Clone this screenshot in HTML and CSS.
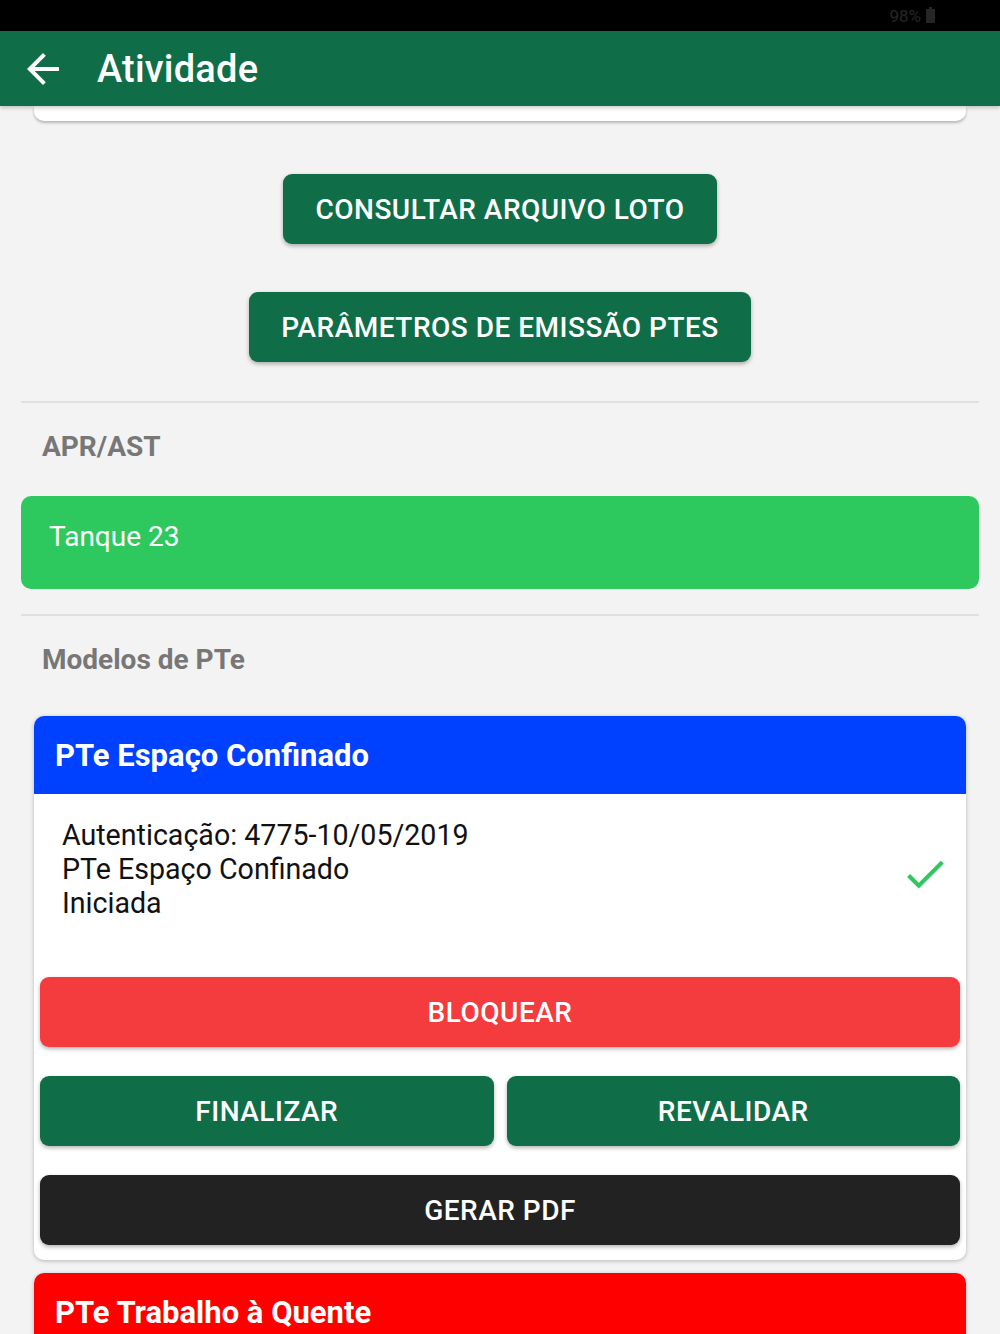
FILE: index.html
```html
<!DOCTYPE html>
<html lang="pt-BR">
<head>
<meta charset="UTF-8" />
<meta name="viewport" content="width=device-width, initial-scale=1" />
<title>Atividade</title>
<link rel="stylesheet" href="styles.css">
</head>
<body>

<div class="status-bar">
  <span class="bateria-texto">98%</span>
  <span class="bateria"></span>
</div>

<header class="app-bar">
  <svg class="voltar" viewBox="0 0 24 24" width="48" height="48">
    <path d="M20 11H7.83l5.59-5.59L12 4l-8 8 8 8 1.41-1.41L7.83 13H20v-2z" fill="#fff"/>
  </svg>
  <h1>Atividade</h1>
</header>

<main>
  <div class="card-anterior"></div>

  <section class="acoes">
    <button class="btn btn-verde">CONSULTAR ARQUIVO LOTO</button>
    <button class="btn btn-verde">PARÂMETROS DE EMISSÃO PTES</button>
  </section>

  <hr class="divisor" />

  <h2 class="secao">APR/AST</h2>
  <div class="apr">Tanque 23</div>

  <hr class="divisor" />

  <h2 class="secao">Modelos de PTe</h2>

  <div class="modelo">
    <div class="modelo-titulo azul">PTe Espaço Confinado</div>
    <div class="modelo-corpo">
      <div class="modelo-info">
        <p>Autenticação: 4775-10/05/2019</p>
        <p>PTe Espaço Confinado</p>
        <p>Iniciada</p>
      </div>
      <svg class="check" viewBox="0 0 24 24" width="50" height="50">
        <path d="M9 16.17L4.83 12l-1.42 1.41L9 19 21 7l-1.41-1.41z" fill="#2ec95e"/>
      </svg>
    </div>
    <div class="modelo-botoes">
      <button class="btn btn-vermelho largo">BLOQUEAR</button>
      <div class="linha">
        <button class="btn btn-verde">FINALIZAR</button>
        <button class="btn btn-verde">REVALIDAR</button>
      </div>
      <button class="btn btn-preto largo">GERAR PDF</button>
    </div>
  </div>

  <div class="modelo">
    <div class="modelo-titulo vermelho">PTe Trabalho à Quente</div>
  </div>
</main>

</body>
</html>
```

FILE: styles.css
```css
body {
  font-family: Roboto, "Noto Sans", sans-serif;
  margin: 0;
  background: #f3f3f3;
  height: 1334px;
  overflow: hidden;
}
.status-bar {
  background: #000;
  height: 31px;
  display: flex;
  align-items: center;
  justify-content: flex-end;
  padding-right: 65px;
  gap: 5px;
}
.bateria-texto {
  color: #262626;
  font-size: 17px;
}
.bateria {
  width: 9px;
  height: 14px;
  background: #262626;
  border-radius: 1px;
  position: relative;
}
.bateria::before {
  content: "";
  position: absolute;
  top: -2px;
  left: 3px;
  width: 3px;
  height: 2px;
  background: #262626;
}

.app-bar {
  background: #0f6e48;
  height: 75px;
  display: flex;
  align-items: center;
  padding-left: 19px;
  position: relative;
  z-index: 2;
  box-shadow: 0 2px 4px rgba(0,0,0,0.2);
}
.app-bar h1 {
  color: white;
  font-size: 38px;
  font-weight: 500;
  letter-spacing: 0.2px;
  margin: 0 0 0 30px;
}

main {
  padding: 0 21px;
}
.card-anterior {
  margin: 0 13px;
  height: 15px;
  background: white;
  border-radius: 0 0 10px 10px;
  box-shadow: 0 2px 3px rgba(0,0,0,0.25);
}

.btn {
  font-family: Roboto, sans-serif;
  font-weight: 500;
  font-size: 28px;
  letter-spacing: 0.5px;
  color: white;
  border: none;
  border-radius: 9px;
  height: 70px;
  padding: 0 32px;
  box-shadow: 0 2px 4px rgba(0,0,0,0.3);
  cursor: pointer;
}
.btn-verde { background: #0f6e48; }
.btn-vermelho { background: #f43c3f; }
.btn-preto { background: #222; }

.acoes {
  display: flex;
  flex-direction: column;
  align-items: center;
  gap: 48px;
  padding: 53px 0 39px;
}

.divisor {
  border: none;
  border-top: 2px solid #e0e0e0;
  margin: 0;
}
.secao {
  color: #777;
  font-size: 28px;
  font-weight: 700;
  margin: 0;
  padding: 27px 21px 33px;
}
.apr {
  background: #2ec95e;
  color: white;
  font-size: 28px;
  border-radius: 10px;
  height: 93px;
  padding: 24px 28px 0;
  box-sizing: border-box;
  margin-bottom: 25px;
}

.modelo {
  margin: 7px 13px 13px;
  background: white;
  border-radius: 10px;
  box-shadow: 0 1px 4px rgba(0,0,0,0.25);
  overflow: hidden;
}
.modelo-titulo {
  color: white;
  font-size: 31px;
  font-weight: 700;
  height: 78px;
  display: flex;
  align-items: center;
  padding-left: 21px;
}
.azul { background: #0040ff; }
.vermelho { background: #ff0000; }

.modelo-corpo {
  display: flex;
  justify-content: space-between;
  align-items: flex-start;
  padding: 24px 16px 0 28px;
  height: 163px;
  box-sizing: border-box;
}
.modelo-info p {
  margin: 0;
  font-size: 28.6px;
  line-height: 34px;
  color: #111;
}
.check {
  margin-top: 31px;
}
.modelo-botoes {
  display: flex;
  flex-direction: column;
  gap: 29px;
  padding: 20px 6px 15px;
}
.largo { width: 100%; }
.linha {
  display: flex;
  gap: 13px;
}
.linha .btn { flex: 1; }
```
